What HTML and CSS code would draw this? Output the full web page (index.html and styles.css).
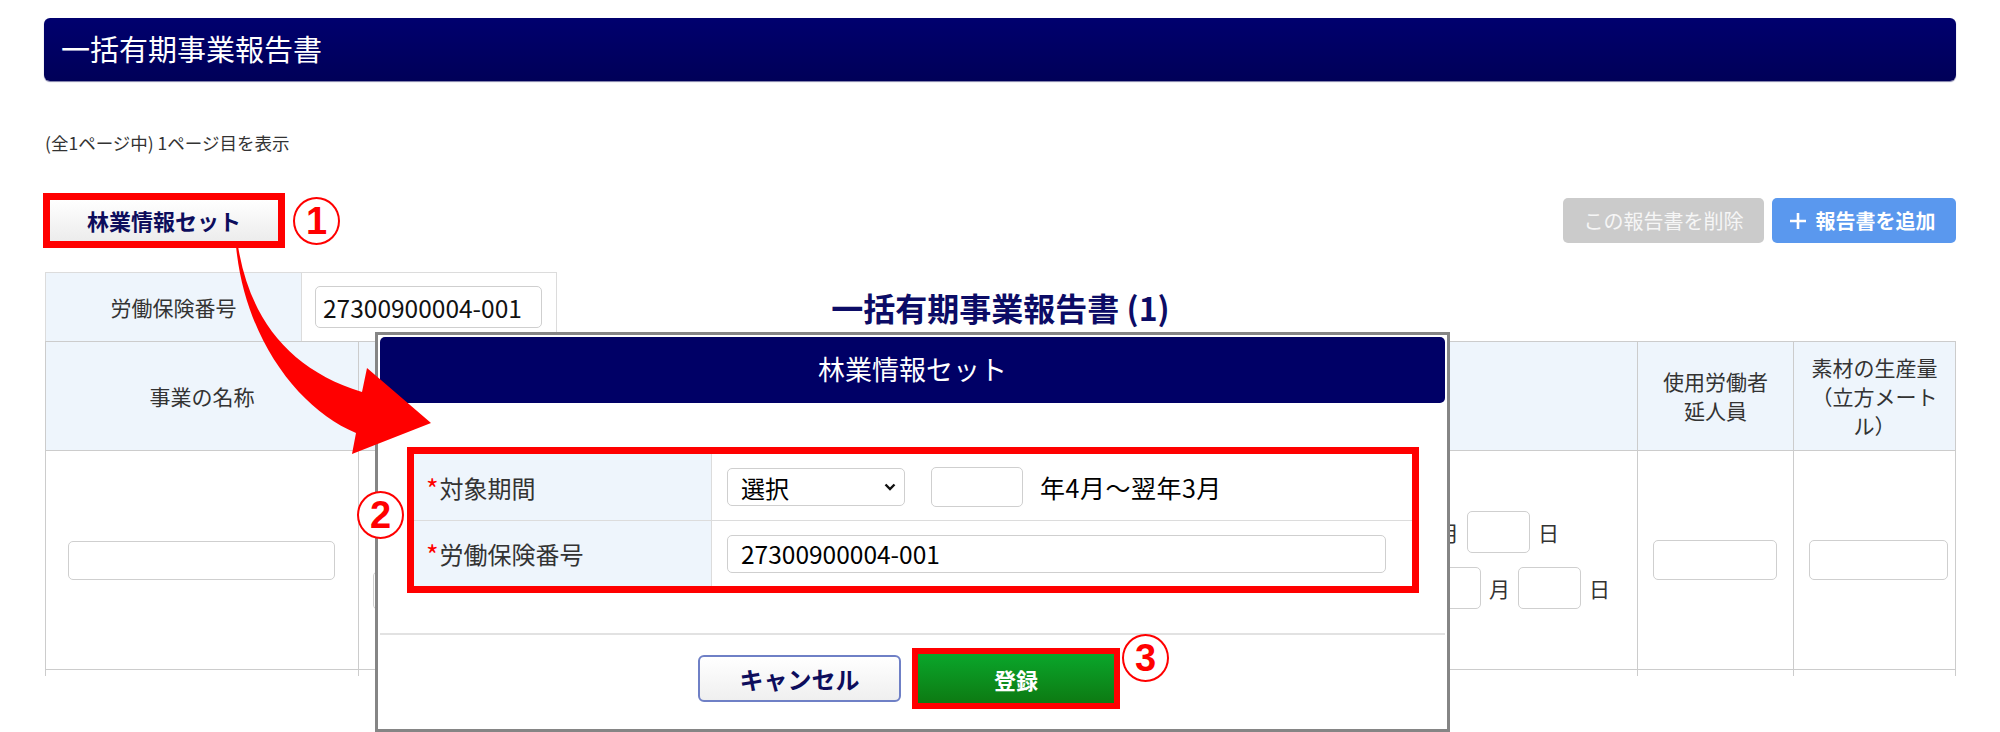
FILE: index.html
```html
<!DOCTYPE html>
<html lang="ja">
<head>
  <meta charset="UTF-8">
  <title>一括有期事業報告書</title>
  <link rel="stylesheet" href="styles.css">
</head>
<body>
  <div class="page">
    <h1 class="page-title">一括有期事業報告書</h1>
    <p class="pager">(全1ページ中) 1ページ目を表示</p>

    <div class="toolbar">
      <div class="mark mark-set"><button class="btn-set">林業情報セット</button></div>
      <span class="num num-1">1</span>
      <div class="toolbar-right">
        <button class="btn-delete">この報告書を削除</button>
        <button class="btn-add">
          <svg class="plus" width="18" height="18" viewBox="0 0 18 18" aria-hidden="true"><path d="M9 1v16M1 9h16" stroke="#fff" stroke-width="2.6"/></svg>
          <span>報告書を追加</span>
        </button>
      </div>
    </div>

    <div class="report-head">
      <div class="mini">
        <div class="mini-label">労働保険番号</div>
        <div class="mini-value"><input class="field field-no" value="27300900004-001"></div>
      </div>
      <h2 class="report-title">一括有期事業報告書 (1)</h2>
    </div>

    <div class="grid-wrap">
      <div class="grid">
        <div class="th">事業の名称</div>
        <div class="th">事業場の所在地</div>
        <div class="th">事業の期間</div>
        <div class="th">使用労働者<br>延人員</div>
        <div class="th">素材の生産量（立方メートル）</div>

        <div class="td"><input class="field field-name"></div>
        <div class="td td-stack">
          <input class="field field-zip">
          <input class="field field-addr">
        </div>
        <div class="td td-dates">
          <div class="date-line line-from">
            <span>令和</span><input class="field field-d"><span>年</span><input class="field field-d"><span>月</span><input class="field field-d"><span>日</span>
          </div>
          <div class="date-line line-to">
            <span>～ 令和</span><input class="field field-d"><span>年</span><input class="field field-d"><span>月</span><input class="field field-d"><span>日</span>
          </div>
        </div>
        <div class="td"><input class="field field-men"></div>
        <div class="td"><input class="field field-vol"></div>

        <div class="td"></div>
        <div class="td"></div>
        <div class="td"></div>
        <div class="td"></div>
        <div class="td"></div>
      </div>
    </div>

    <!-- 林業情報セット ダイアログ -->
    <div class="modal">
      <div class="modal-head">林業情報セット</div>
      <div class="modal-body">
        <div class="mark mark-form">
          <span class="num num-2">2</span>
          <div class="form-row">
            <div class="form-label"><span class="req">*</span>対象期間</div>
            <div class="form-value">
              <span class="select-wrap">
                <select class="select"><option>選択</option></select>
                <svg class="chevron" width="12" height="8" viewBox="0 0 12 8" aria-hidden="true"><path d="M1.5 1.5l4.5 4.5 4.5-4.5" fill="none" stroke="#111" stroke-width="2.4"/></svg>
              </span>
              <input class="field field-year">
              <span class="period-text">年4月～翌年3月</span>
            </div>
          </div>
          <div class="form-row">
            <div class="form-label"><span class="req">*</span>労働保険番号</div>
            <div class="form-value">
              <input class="field field-insno" value="27300900004-001">
            </div>
          </div>
        </div>
      </div>
      <div class="modal-foot">
        <button class="btn-cancel">キャンセル</button>
        <div class="mark mark-save">
          <button class="btn-save">登録</button>
          <span class="num num-3">3</span>
        </div>
      </div>
    </div>

    <svg class="arrow" width="460" height="470" viewBox="0 0 460 470" aria-hidden="true">
      <path d="M238 246 C250 320 290 370 362 392 L367 368 L431 423 L352 454 L356 433 C300 410 245 340 236 246 Z" fill="#ff0000"/>
    </svg>
  </div>
</body>
</html>
```

FILE: styles.css
```css
* {
  box-sizing: border-box;
}
body {
  margin: 0;
  background: #fff;
  color: #333;
  font-family: "Noto Sans CJK JP", "Noto Sans", sans-serif;
}
.page {
  position: relative;
  height: 732px;
  padding: 18px 44px 0 45px;
  overflow: hidden;
}
.page-title {
  margin: 0 0 0 -1px;
  height: 63px;
  padding-left: 17px;
  background: linear-gradient(#00006e, #000058);
  border-radius: 6px;
  box-shadow: 0 1px 1px #7a7aa6;
  color: #fff;
  font-size: 29px;
  font-weight: normal;
  line-height: 60px;
}
.pager {
  margin: 50px 0 0;
  font-size: 17.5px;
  line-height: 24px;
  color: #333;
}

/* toolbar */
.toolbar {
  margin-top: 38px;
  height: 55px;
  display: flex;
  align-items: center;
}
.mark {
  border: 7px solid #ff0000;
}
.mark-set {
  margin-left: -2px;
  width: 242px;
  height: 55px;
}
.btn-set {
  display: block;
  width: 228px;
  height: 41px;
  border: none;
  background: linear-gradient(#ffffff, #ececec);
  color: #0d0d5c;
  font-family: inherit;
  font-size: 22px;
  font-weight: bold;
  line-height: 41px;
  padding: 0;
}
.num {
  display: block;
  width: 47px;
  height: 48px;
  border: 2px solid #ff0000;
  border-radius: 50%;
  color: #ff0000;
  font-family: "Liberation Sans", Arial, sans-serif;
  font-size: 38px;
  font-weight: bold;
  line-height: 44px;
  text-align: center;
  background: #fff;
}
.num-1 {
  margin-left: 8px;
}
.toolbar-right {
  margin-left: auto;
  display: flex;
  gap: 8px;
}
.btn-delete,
.btn-add {
  height: 45px;
  border: none;
  border-radius: 5px;
  font-family: inherit;
  font-size: 20px;
  line-height: 45px;
  padding: 0;
}
.btn-delete {
  width: 201px;
  background: #cbcbcb;
  color: #f6f6f6;
}
.btn-add {
  width: 184px;
  background: #5a98ee;
  color: #fff;
  font-weight: bold;
  display: flex;
  align-items: center;
  justify-content: center;
  gap: 9px;
  padding-right: 4px;
}

/* report head */
.report-head {
  margin-top: 24px;
  height: 69px;
  display: grid;
  grid-template-columns: 1fr auto 1fr;
  align-items: center;
}
.mini {
  display: flex;
  width: 512px;
  height: 69px;
  border: 1px solid #dcdcdc;
  border-bottom: none;
}
.mini-label {
  width: 256px;
  background: #eef5fc;
  border-right: 1px solid #dcdcdc;
  display: flex;
  align-items: center;
  justify-content: center;
  font-size: 21px;
}
.mini-value {
  flex: 1;
  display: flex;
  align-items: center;
  padding-left: 13px;
}
.report-title {
  margin: 0;
  color: #0c0c66;
  font-size: 32px;
  font-weight: bold;
  line-height: 40px;
  white-space: nowrap;
}

/* fields */
.field {
  display: block;
  border: 1px solid #cfcfcf;
  border-radius: 5px;
  background: #fff;
  color: #000;
  font-family: inherit;
  font-size: 24px;
  padding: 0 0 0 12px;
  outline: none;
}
.field-no {
  width: 227px;
  height: 42px;
  font-size: 24.5px;
  padding-left: 7px;
  color: #111;
}

/* main table */
.grid-wrap {
  height: 335px;
  overflow: hidden;
}
.grid {
  display: grid;
  grid-template-columns: 313px 442px 1fr 156px 162px;
  grid-template-rows: 109px 219px 60px;
  border-top: 1px solid #cccccc;
  border-left: 1px solid #cccccc;
}
.th,
.td {
  border-right: 1px solid #cccccc;
  border-bottom: 1px solid #cccccc;
}
.th {
  background: #eef5fc;
  display: flex;
  align-items: center;
  justify-content: center;
  padding: 0 10px;
  font-size: 21px;
  line-height: 29px;
  text-align: center;
}
.td {
  display: flex;
  align-items: center;
  font-size: 21px;
}
.field-name {
  width: 267px;
  height: 39px;
  margin-left: 22px;
}
.td-stack {
  flex-direction: column;
  align-items: flex-start;
  justify-content: center;
  gap: 22px;
  padding-left: 14px;
}
.field-zip {
  width: 160px;
  height: 39px;
  margin-left: 40px;
}
.field-addr {
  width: 400px;
  height: 39px;
}
.td-dates {
  flex-direction: column;
  justify-content: center;
  align-items: stretch;
  gap: 14px;
}
.date-line {
  display: flex;
  align-items: center;
  justify-content: flex-end;
  gap: 8px;
}
.line-from {
  padding-right: 78px;
}
.line-to {
  padding-right: 27px;
}
.field-d {
  width: 63px;
  height: 42px;
}
.field-men {
  width: 124px;
  height: 40px;
  margin-left: 15px;
}
.field-vol {
  width: 139px;
  height: 40px;
  margin-left: 15px;
}

/* dialog */
.modal {
  position: absolute;
  left: 375px;
  top: 332px;
  width: 1075px;
  height: 400px;
  border: 3px solid #858585;
  background: #fff;
  padding: 2px;
  z-index: 5;
}
.modal-head {
  height: 66px;
  background: #000066;
  border-radius: 5px;
  color: #fff;
  font-size: 27px;
  line-height: 64px;
  text-align: center;
}
.modal-body {
  padding: 44px 26px 40px 27px;
}
.mark-form {
  position: relative;
}
.num-2 {
  position: absolute;
  left: -57px;
  top: 37px;
}
.form-row {
  display: grid;
  grid-template-columns: 298px 1fr;
  height: 66px;
}
.form-row + .form-row {
  border-top: 1px solid #dcdcdc;
}
.form-label {
  background: #eef5fc;
  border-right: 1px solid #dcdcdc;
  padding-left: 12px;
  display: flex;
  align-items: center;
  font-size: 24px;
  color: #333;
}
.req {
  color: #ff0000;
  font-size: 27px;
  margin-right: 1px;
  position: relative;
  top: 1px;
}
.form-value {
  display: flex;
  align-items: center;
  padding-left: 15px;
  color: #000;
}
.select-wrap {
  position: relative;
  display: block;
}
.select {
  display: block;
  width: 178px;
  height: 38px;
  appearance: none;
  -webkit-appearance: none;
  border: 1px solid #cfcfcf;
  border-radius: 5px;
  background: #fff;
  color: #000;
  font-family: inherit;
  font-size: 24px;
  padding: 0 0 0 13px;
}
.chevron {
  position: absolute;
  right: 9px;
  top: 15px;
}
.field-year {
  width: 92px;
  height: 40px;
  margin-left: 26px;
}
.period-text {
  margin-left: 17px;
  font-size: 25px;
  letter-spacing: 0.5px;
}
.field-insno {
  width: 659px;
  height: 38px;
  padding-left: 13px;
  font-size: 24.5px;
}
.modal-foot {
  border-top: 2px solid #e2e2e2;
  display: flex;
  justify-content: center;
  align-items: flex-start;
  gap: 11px;
  padding: 13px 7px 0 0;
}
.btn-cancel {
  margin-top: 7px;
  width: 203px;
  height: 47px;
  border: 2px solid #6f80c6;
  border-radius: 6px;
  background: linear-gradient(#ffffff, #efefef);
  color: #0d0d5c;
  font-family: inherit;
  font-size: 24px;
  font-weight: bold;
  padding: 0;
}
.mark-save {
  position: relative;
  border-width: 6px;
}
.btn-save {
  display: block;
  width: 196px;
  height: 49px;
  border: none;
  background: linear-gradient(#0aa62b, #0d7a12);
  color: #fff;
  font-family: inherit;
  font-size: 22px;
  font-weight: bold;
  padding: 0;
}
.num-3 {
  position: absolute;
  left: calc(100% + 8px);
  top: -20px;
}

.arrow {
  position: absolute;
  left: 0;
  top: 0;
  z-index: 10;
}
```
